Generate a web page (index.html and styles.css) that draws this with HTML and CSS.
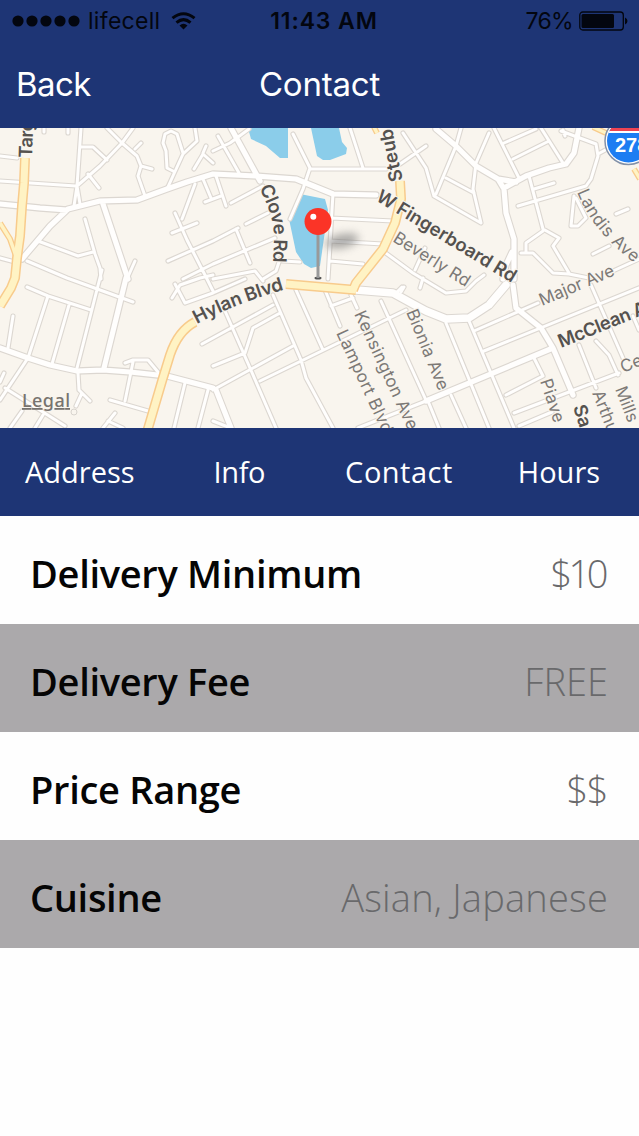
FILE: index.html
```html
<!DOCTYPE html>
<html lang="en">
<head>
  <meta charset="UTF-8" />
  <meta name="viewport" content="width=device-width, initial-scale=1.0"/>
  <title>Contact</title>
  <link rel="stylesheet" href="styles.css">
</head>
<body>

  <header>
    <div class="status-bar">
      <div class="carrier">
        <svg class="signal" width="68" height="12" viewBox="0 0 68 12">
          <circle cx="6" cy="6" r="5.6"/><circle cx="20" cy="6" r="5.6"/><circle cx="34" cy="6" r="5.6"/><circle cx="48" cy="6" r="5.6"/><circle cx="62" cy="6" r="5.6"/>
        </svg>
        <span class="carrier-name">lifecell</span>
        <svg class="wifi" width="25" height="18" viewBox="0 0 25 18">
          <path class="wave" d="M1.500 6.200Q12.500 -2.800 23.500 6.200M5.500 10.700Q12.500 4.600 19.500 10.700"/>
          <path d="M8.500 13.500Q12.500 10 16.500 13.500L12.500 17.500Z"/>
        </svg>
      </div>
      <span class="time">11:43 AM</span>
      <div class="power">
        <span class="percent">76%</span>
        <svg width="49" height="20" viewBox="0 0 49 20">
          <rect class="case" x="0.800" y="1" width="43.500" height="18" rx="3"/>
          <rect x="2.500" y="3" width="32.500" height="14" rx="1.500"/>
          <path d="M46 6.500Q48.500 7.500 48.500 10T46 13.500Z"/>
        </svg>
      </div>
    </div>
    <nav class="title-bar">
      <a class="back" href="#">Back</a>
      <h1>Contact</h1>
    </nav>
  </header>

  <section class="map">
    <svg width="639" height="300" viewBox="0 128 639 300">
      <defs>
        <filter id="soft" x="-50%" y="-80%" width="200%" height="260%"><feGaussianBlur stdDeviation="4"/></filter>
        <clipPath id="shield-clip"><circle cx="628.500" cy="141" r="21.500"/></clipPath>

        <!-- side streets -->
        <path id="streets" d="M0 181L76 186M0 156L17 158M81 128L77 186L74 206M133 128L122 143L100 166L77 186L80 204
          M107 128L122 143L137 156L141 166L138 176L145 196M135 149L141 143M141 166L152 169M81 147H93L107 160M88 174L99 188
          M167 189L183 154L197 141L195 128M173 171L167 168L166 151L163 143L165 134L171 131L177 134L183 153
          M194 169L203 154L213 163M203 153L206 146M203 179L211 198M195 184L182 219M175 213L187 240L207 279L213 291M172 233L197 223
          M168 261L213 241L238 228M183 279L213 264L275 238M85 219L95 254L100 268L101 279M135 261L127 279M38 241L78 256L93 252
          M27 261L67 278L100 290L133 302M0 258L15 262M27 287L48 296L91 310M48 296L28 358L0 400M69 305L52 364M102 270L77 368
          M13 316L8 348M78 373L79 390L90 401M82 393L76 406M5 388L65 426M22 411L10 428M43 415L35 428M0 382L4 373
          M125 363L133 360H148L158 372M133 362L125 401M110 400L148 411M115 413L103 428M108 421L123 428
          M185 383L174 428M208 390L198 428M172 298L180 285L200 278L213 275M175 284L185 303L213 293L245 279M202 344L273 305
          M44 128V132M68 128V133
          M218 136L239 173M213 151L230 143L249 129M216 176L226 206M205 202L221 196M231 203L263 186M246 224L268 213
          M236 229L250 263M213 279L255 271L263 281M263 279L276 271L280 259M283 261L300 262
          M293 134L310 168L303 189L290 219M310 169H386M350 128L363 168M333 193L328 279M331 218L393 221M330 241L383 244M330 261L363 264
          M225 311L250 368L276 428M273 295L301 360L306 378L333 428M296 290L323 350M325 290L340 326M331 306L353 298M351 295L357 308
          M213 366L245 353L253 328L280 313M213 390L293 346M260 381L406 310M381 301L425 398M358 428L426 401M213 421L228 427M396 293L402 287
          M383 251L413 273L446 293L466 291L476 281M400 164L426 146M403 133L426 168L434 196L481 223L473 189L476 163L489 133
          M456 146L436 194M446 178L474 193M461 128L456 146M494 128L519 178M504 143L536 129M513 159L549 141M541 128L563 163
          M561 131L596 144L598 156L591 179L586 186L518 206M598 154L609 148M529 176L543 229L559 238L553 246L569 273
          M543 231L526 243V253M534 189L554 183M521 253H533L553 273L569 274L589 278M574 196L571 226L578 226L586 218L576 198
          M593 254L609 246M616 214L628 209M613 271L639 259M563 130L565 136
          M446 323L489 428M469 321L514 428M451 395L466 428M428 401L439 428M474 331L538 303M484 351L639 288
          M506 395L543 376L534 358M514 413L619 373M519 426L552 412M579 345L596 388M591 285L623 358M596 341L609 355L618 375
          M633 316L639 330M484 275L476 281M404 287L401 292M415 270L425 248M423 278L420 288"/>

        <!-- through roads -->
        <path id="roads" d="M0 204L40 208L67 210M22 259L50 226L68 209L100 201L137 200L167 189L187 182L213 174L256 176L296 179L333 194L376 195
          M103 204L128 279M0 348L28 358L50 365L77 371L103 370L130 372L167 376L213 388M126 278L104 368M231 128L260 181
          M216 390L231 428M426 401L553 348M513 285L516 308L541 328L553 348L573 395
          M436 129L456 146L476 166L498 179L504 189L506 213L514 239V279M504 188L526 176L549 168L566 164L574 153L579 128
          M512 252L506 265L503 279M498 179L516 182"/>
        <path id="avenue" d="M356 290L393 293L413 304L426 311L446 319L469 318L489 305L506 285"/>

        <!-- yellow arterials -->
        <path id="arterials" d="M25 158L24 183L22 206L20 236L17 258L15 278L11 288L0 306M147 432L162 381L170 355Q178 331 195 322
          M286 284L356 290M400 181L401 199L395 223L383 249L356 283L353 290"/>
        <path id="ramps" d="M0 223L10 239L17 259M374 127L377 133M593 127L606 133M634 169L640 179"/>

        <path id="clove" d="M259 188Q274 215 274 238L273 270"/>
        <path id="steuben" d="M403 180L397 155L387 100"/>
        <path id="fingerboard" d="M375 200L520 288"/>
        <path id="beverly" d="M392 241L475 293"/>
        <path id="landis" d="M577 192Q592 232 642 269"/>
        <path id="major" d="M542 306L630 269"/>
        <path id="mcclean" d="M561 348L680 300"/>
        <path id="hylan" d="M197 324Q238 302 300 285"/>
        <path id="bionia" d="M406 312L446 409"/>
        <path id="kensington" d="M354 314L420 456"/>
        <path id="lamport" d="M336 333L395 460"/>
        <path id="piave" d="M540 381L560 442"/>
        <path id="sand" d="M573 407L590 460"/>
        <path id="arthur" d="M592 393L620 464"/>
        <path id="mills" d="M615 389L640 454"/>
        <path id="center" d="M623 373L670 354"/>
      </defs>

      <g class="water">
        <path d="M248 128H288V158H280L266 146L251 139Z"/>
        <path d="M311 128H339L342 142L347 148L346 154L330 160H323L317 156Z"/>
        <path d="M300 194L325 199L328 210L320 266L311 268L304 264L296 252L289 219Z"/>
      </g>

      <g class="casing">
        <use href="#streets" class="w-street"/>
        <use href="#roads" class="w-road"/>
        <use href="#avenue" class="w-avenue"/>
      </g>
      <g class="surface">
        <use href="#streets" class="w-street"/>
        <use href="#roads" class="w-road"/>
        <use href="#avenue" class="w-avenue"/>
      </g>
      <circle class="cul-de-sac" cx="74" cy="412" r="3"/>
      <g class="arterial-casing">
        <use href="#ramps" class="w-ramp"/>
        <use href="#arterials" class="w-arterial"/>
      </g>
      <g class="arterial-surface">
        <use href="#ramps" class="w-ramp"/>
        <use href="#arterials" class="w-arterial"/>
      </g>

      <g class="label minor">
        <text><textPath href="#beverly" textLength="87">Beverly Rd</textPath></text>
        <text><textPath href="#landis" textLength="92">Landis Ave</textPath></text>
        <text><textPath href="#major" textLength="80">Major Ave</textPath></text>
        <text><textPath href="#bionia" textLength="86">Bionia Ave</textPath></text>
        <text><textPath href="#kensington" textLength="129">Kensington Ave</textPath></text>
        <text><textPath href="#lamport" textLength="112">Lamport Blvd</textPath></text>
        <text><textPath href="#piave" textLength="45">Piave</textPath></text>
        <text><textPath href="#arthur">Arthur</textPath></text>
        <text><textPath href="#mills">Mills</textPath></text>
        <text><textPath href="#center">Ce</textPath></text>
      </g>
      <g class="label major">
        <text transform="translate(32 158) rotate(-88)" textLength="38">Targ</text>
        <text><textPath href="#clove" textLength="77">Clove Rd</textPath></text>
        <text><textPath href="#steuben" textLength="53">Steub</textPath></text>
        <text><textPath href="#fingerboard" textLength="160">W Fingerboard Rd</textPath></text>
        <text><textPath href="#hylan" textLength="94">Hylan Blvd</textPath></text>
        <text><textPath href="#mcclean" textLength="94">McClean A</textPath></text>
        <text><textPath href="#sand">Sa</textPath></text>
      </g>

      <!-- interstate shield -->
      <circle class="shield-rim" cx="628.500" cy="141" r="23.500"/>
      <g clip-path="url(#shield-clip)">
        <rect class="shield-blue" x="605" y="118" width="48" height="48"/>
        <rect class="shield-red" x="605" y="118" width="48" height="13"/>
        <rect class="shield-line" x="605" y="131" width="48" height="2"/>
      </g>
      <text class="shield-text" x="615" y="152">278</text>

      <!-- pin -->
      <ellipse class="pin-shadow" cx="342" cy="241" rx="17" ry="7" transform="rotate(-12 342 241)" filter="url(#soft)"/>
      <ellipse class="pin-tip" cx="318" cy="278" rx="3.500" ry="1.500"/>
      <rect class="pin-stick" x="316.500" y="232" width="3" height="46"/>
      <circle class="pin-head" cx="318" cy="221.500" r="13.500"/>
      <circle class="pin-shine" cx="313.300" cy="216.700" r="3"/>

      <text class="legal" x="22" y="407" textLength="48">Legal</text>
    </svg>
  </section>

  <nav class="tabs">
    <a class="tab-address" href="#">Address</a>
    <a class="tab-info" href="#">Info</a>
    <a class="tab-contact" href="#">Contact</a>
    <a class="tab-hours" href="#">Hours</a>
  </nav>

  <ul class="details">
    <li><span class="name">Delivery Minimum</span><span class="value price">$10</span></li>
    <li><span class="name">Delivery Fee</span><span class="value">FREE</span></li>
    <li><span class="name">Price Range</span><span class="value price-range">$$</span></li>
    <li><span class="name">Cuisine</span><span class="value cuisine">Asian, Japanese</span></li>
  </ul>

</body>
</html>
```
FILE: styles.css
```css
body {
  font-family: 'Open Sans', 'Noto Sans', sans-serif;
  background-color: #fefefe;
  margin: 0;
  padding: 0;
}
a {
  color: white;
  text-decoration: none;
}
header {
  background-color: #1e3575;
  height: 128px;
  font-family: Inter, sans-serif;
}
.status-bar {
  display: grid;
  grid-template-columns: 1fr auto 1fr;
  align-items: center;
  height: 41px;
  padding: 0 11px 0 12px;
  font-size: 23px;
  color: #03060f;
  fill: #03060f;
}
.carrier, .power {
  display: flex;
  align-items: center;
}
.carrier-name {
  margin: 0 11px 0 8px;
  letter-spacing: 0.3px;
}
.wifi .wave {
  fill: none;
  stroke: #03060f;
  stroke-width: 3;
}
.time {
  font-weight: 600;
  letter-spacing: 0.9px;
  padding-left: 8px;
}
.power {
  justify-content: flex-end;
  gap: 6px;
}
.percent {
  letter-spacing: -0.7px;
}
.power .case {
  fill: none;
  stroke: #03060f;
  stroke-width: 1.3;
}
.title-bar {
  display: grid;
  grid-template-columns: 1fr auto 1fr;
  align-items: center;
  height: 85px;
  padding: 0 16px;
  font-size: 33px;
  color: white;
}
.back {
  letter-spacing: -0.6px;
}
.title-bar h1 {
  margin: 0;
  font-size: 33px;
  font-weight: 400;
  letter-spacing: -0.2px;
}
.map {
  height: 300px;
  overflow: hidden;
  background-color: #f9f5ee;
}
.map svg {
  display: block;
}
.water {
  fill: #8bcdea;
}
.casing, .surface, .arterial-casing, .arterial-surface {
  fill: none;
  stroke-linejoin: round;
  stroke-linecap: round;
}
.casing {
  stroke: #dcd7d1;
}
.casing .w-street { stroke-width: 5.2; }
.casing .w-road { stroke-width: 7.4; }
.casing .w-avenue { stroke-width: 9.5; }
.surface {
  stroke: #fffefd;
}
.surface .w-street { stroke-width: 3; }
.surface .w-road { stroke-width: 5.2; }
.surface .w-avenue { stroke-width: 7.4; }
.arterial-casing {
  stroke: #f8cb8c;
  stroke-linecap: butt;
}
.arterial-casing .w-arterial { stroke-width: 10; }
.arterial-casing .w-ramp { stroke-width: 6; }
.arterial-surface {
  stroke: #fff3c4;
  stroke-linecap: butt;
}
.arterial-surface .w-arterial { stroke-width: 7; }
.arterial-surface .w-ramp { stroke-width: 3.4; }
.cul-de-sac {
  fill: none;
  stroke: #d8d4ce;
}
.label {
  font-family: Inter, sans-serif;
  paint-order: stroke;
  stroke: #f9f5ee;
  stroke-width: 2px;
}
.minor {
  font-size: 17px;
  fill: #7c7976;
}
.major {
  font-size: 18.5px;
  font-weight: 600;
  fill: #55524f;
}
.shield-rim {
  fill: white;
  stroke: #8391a8;
  stroke-width: 1.5;
}
.shield-blue { fill: #1d7df2; }
.shield-red { fill: #ee4452; }
.shield-line { fill: white; }
.shield-text {
  font: bold 20px 'Liberation Sans', sans-serif;
  fill: white;
}
.pin-shadow {
  fill: #777;
  opacity: 0.6;
}
.pin-tip { fill: #555; }
.pin-stick { fill: #999; }
.pin-head { fill: #fb3427; }
.pin-shine { fill: #fff; }
.legal {
  font: 500 18px 'Noto Sans', sans-serif;
  fill: #77736f;
  text-decoration: underline;
}
.tabs {
  display: flex;
  align-items: center;
  height: 87px;
  padding: 0 0 1px 25px;
  background-color: #1e3575;
  font-size: 29px;
}
.tab-info {
  margin-left: 79px;
  letter-spacing: -0.4px;
}
.tab-contact {
  margin-left: 80px;
  letter-spacing: 0.5px;
}
.tab-hours {
  margin-left: 65px;
}
.details {
  list-style: none;
  margin: 0;
  padding: 0;
}
.details li {
  display: flex;
  justify-content: space-between;
  align-items: center;
  height: 108px;
  padding: 5px 31px 0 30px;
  box-sizing: border-box;
  font-size: 38px;
}
.details li:nth-child(even) {
  background-color: #aba9ab;
}
.name {
  font-weight: 600;
  letter-spacing: -0.3px;
  color: #050505;
}
.value {
  font-weight: 300;
  color: #69696b;
}
.price {
  letter-spacing: -3.5px;
  padding-right: 3px;
}
.price-range {
  letter-spacing: -1.500px;
  padding-right: 1px;
}
.cuisine {
  letter-spacing: 0.2px;
}
```
